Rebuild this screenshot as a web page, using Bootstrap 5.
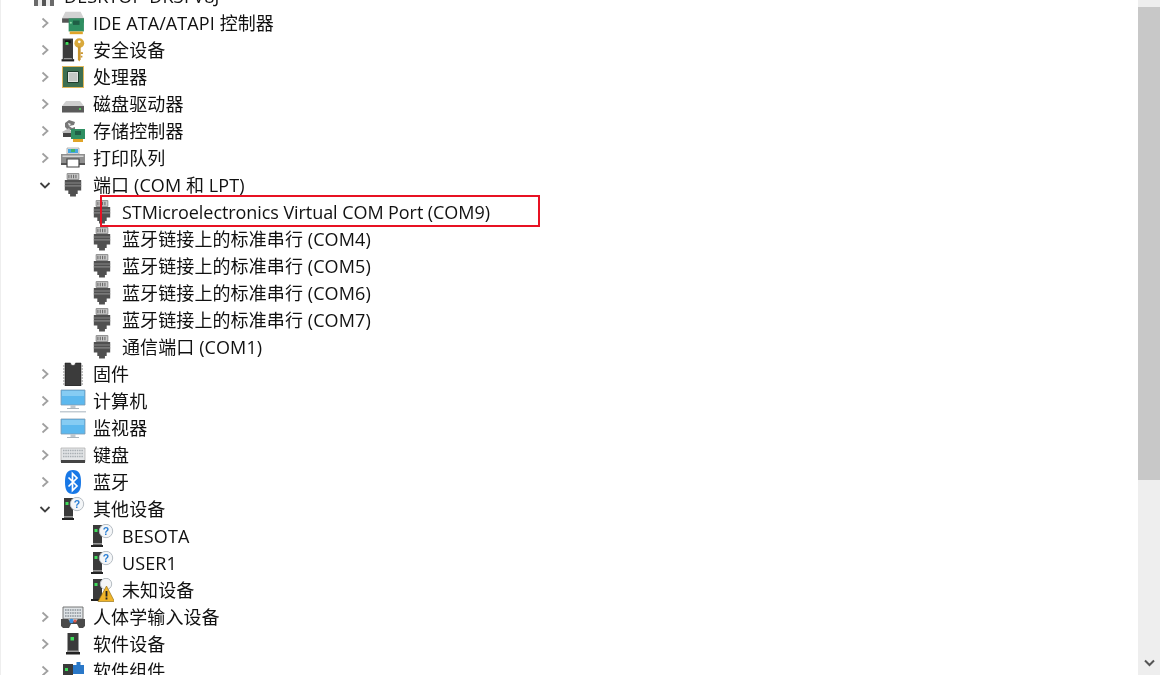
<!DOCTYPE html>
<html lang="zh-CN">
<head>
<meta charset="utf-8">
<title>设备管理器</title>
<link href="https://cdn.jsdelivr.net/npm/bootstrap@5.3.0/dist/css/bootstrap.min.css" rel="stylesheet">
<style>
html,body{height:100%;overflow:hidden;background:#fff}
body{font-family:"Open Sans","Noto Sans CJK SC",sans-serif;font-size:18px;color:#111}
.dm-shell{width:1163px;height:675px;overflow:hidden;border-left:1px solid #eee}
.dm-tree{flex:0 0 1137px;overflow:hidden;position:relative}
.dm-list{margin:-18px 0 0;padding:0;list-style:none;filter:blur(.3px)}
.dm-row{height:27px;white-space:nowrap}
.dm-row.l1{padding-left:36px}
.dm-row.l2{padding-left:89px}
.dm-row.l0{padding-left:7px}
.dm-tw{flex:0 0 16px;width:16px;height:16px;margin-right:8px}
.dm-ic{flex:0 0 24px;width:24px;height:24px;margin-right:8px}
.dm-ic.dm-wide{flex-basis:26px;width:26px;margin:0 7px 0 -1px}
.dm-lab{letter-spacing:.1px;line-height:27px;transform:translateY(1px)}
.dm-tight{letter-spacing:-.07px}
.dm-red{position:absolute;left:99px;top:195px;width:440px;height:32px;border:2px solid #e81123;pointer-events:none}
.dm-sb{flex:0 0 22px;width:22px;height:675px;background:#eee;position:relative}
.dm-thumb{height:473px;margin-top:7px;background:#c8c8c8}
.dm-arr{position:absolute;left:6px;bottom:8px;width:11px;height:8px}
</style>
</head>
<body>
<svg width="0" height="0" class="position-absolute">
<defs>
<symbol id="chev-r" viewBox="0 0 16 16"><path d="M5.500 3.500 10.500 8 5.500 12.500" fill="none" stroke="#a0a0a0" stroke-width="1.800"/></symbol>
<symbol id="chev-d" viewBox="0 0 16 16"><path d="M3.500 6 8 10.500 12.500 6" fill="none" stroke="#404040" stroke-width="1.800"/></symbol>
<symbol id="ic-top" viewBox="0 0 24 24">
<path d="M2 0h20v22h-4V5H6v17H2z" fill="#6a6a6a"/><path d="M6 5h12v17H6z" fill="#ededed"/><path d="M10 8h4v14h-4z" fill="#555"/>
</symbol>
<symbol id="ic-port" viewBox="5 1.500 14 20.500">
<path d="M7 2h10v5H7z" fill="#c9c9c9" stroke="#888" stroke-width=".8"/>
<path d="M8.500 3v3M10.500 3v3M12.500 3v3M14.500 3v3" stroke="#666" stroke-width=".9"/>
<path d="M5 7.500h14v9h-3v3h-1.500v2h-5v-2H8v-3H5z" fill="#505050"/>
<path d="M5 10h14M5 12.500h14" stroke="#858585" stroke-width=".9"/>
</symbol>
<symbol id="ic-ide" viewBox="1 1.500 22 21.500">
<path d="M2 8 5 2h14l3 6v3H2z" fill="#d2d2d2"/><path d="M2 8h20v4H2z" fill="#555"/>
<path d="M8 8h14v12H8z" fill="#2f8f62"/><path d="M12 10h6v4h-6z" fill="#1f5f46"/><circle cx="10" cy="12" r="1" fill="#8fd9a8"/>
<path d="M9 20h12v2.500H9z" fill="#e0a428"/>
</symbol>
<symbol id="ic-sec" viewBox="1.500 1.500 21 21">
<path d="M3 2h9v18H3z" fill="#3c3c3c"/><path d="M5 3.500h5V6H5z" fill="#111"/><path d="M5.500 5h2.500v2.500H5.500z" fill="#3fdc5a"/>
<path d="M2 20h11v2H2z" fill="#222"/><path d="M4 19h7v1H4z" fill="#999"/>
<circle cx="17.500" cy="6" r="4.300" fill="#d9a93c"/><circle cx="17.500" cy="4.800" r="1.200" fill="#fff"/>
<path d="M16.300 9h2.400v11l-1.200 2-1.200-1.500z" fill="#c9952e"/><path d="M18.700 14h2v1.500h-2zM18.700 17h1.500v1.500h-1.500z" fill="#c9952e"/>
</symbol>
<symbol id="ic-cpu" viewBox="0 0 24 24">
<path d="M1 1h22v22H1z" fill="#e2b85c"/><path d="M2 2h20v20H2z" fill="#3c6e50"/><path d="M6.500 6.500h11v11h-11z" fill="#dfe3df" stroke="#1f3d2c"/>
<path d="M8 8h8v8H8z" fill="#c5c9c5"/>
</symbol>
<symbol id="ic-disk" viewBox="0 0 24 24">
<path d="M5 9h14l4 5H1z" fill="#cfcfcf"/><path d="M1 14h22v6H1z" fill="#5a5a5a"/><path d="M1 20h22v1H1z" fill="#aaa"/><circle cx="19" cy="17" r="1.100" fill="#4fdc5a"/>
</symbol>
<symbol id="ic-stor" viewBox="0 0 24 24">
<path d="M8 1l6 2-1 3-5 1 3 2 3-1v3H7l-3-3V4z" fill="#777"/><path d="M7 4l3 1-2 2z" fill="#eee"/>
<path d="M1 13l7-4 3 5H2z" fill="#bbb"/><path d="M2 14h9v4H2z" fill="#444"/>
<path d="M10 10h14v10H10z" fill="#2f8f62"/><path d="M14 12h6v4h-6z" fill="#1f5f46"/><path d="M12 20h10v3H12z" fill="#e0a428"/>
</symbol>
<symbol id="ic-prn" viewBox="0 0 24 24">
<path d="M6 2h12v6H6z" fill="#f2f2f2" stroke="#999" stroke-width=".7"/><path d="M7 3h10v4H7z" fill="#49a6e0"/><path d="M10 3h4v3h-4z" fill="#3fb56b"/>
<path d="M0 8h24v9H0z" fill="#8f8f8f"/><path d="M1.500 9.500h21V11h-21z" fill="#d5d5d5"/><path d="M0 17h24v2H0z" fill="#555"/>
<path d="M6 13h12v8H6z" fill="#fff" stroke="#444" stroke-width="1.200"/>
</symbol>
<symbol id="ic-fw" viewBox="0 0 24 24">
<path d="M4 1h5.500a2.500 2.500 0 0 0 5 0H20v23H4z" fill="#3b3b3b" stroke="#111" stroke-width=".5"/>
<path d="M2 4h2M2 7h2M2 10h2M2 13h2M2 16h2M2 19h2M2 22h2M20 4h2M20 7h2M20 10h2M20 13h2M20 16h2M20 19h2M20 22h2" stroke="#aaa" stroke-width="1.300"/>
</symbol>
<symbol id="ic-pc" viewBox="0 0 26 24">
<path d="M1 1h24v15H1z" fill="#5cb8ee" stroke="#7d9bb0" stroke-width=".8"/><path d="M2 2h22v5H2z" fill="#86ccf3"/>
<path d="M10.500 16h5v3h-5z" fill="#c0c8ce"/><path d="M7 19h12v1H7z" fill="#a9b4bc"/><path d="M0 22h26v1.500H0z" fill="#c4ccd3"/>
</symbol>
<symbol id="ic-mon" viewBox="0 0 26 24">
<path d="M1 3h24v15H1z" fill="#5cb8ee" stroke="#7d9bb0" stroke-width=".8"/><path d="M2 4h22v5H2z" fill="#86ccf3"/>
<path d="M10.500 18h5v3h-5z" fill="#c0c8ce"/><path d="M7 21h12v1H7z" fill="#a9b4bc"/>
</symbol>
<symbol id="ic-kb" viewBox="0 0 26 24">
<path d="M1 5h24v14H1z" fill="#e3e5e7" stroke="#aaa" stroke-width=".7"/><path d="M3 7.500h20M3 10.500h20M3 13.500h20" stroke="#a8aeb3" stroke-width="1.500" stroke-dasharray="1.500 .8"/>
<path d="M1 17h24v3H1z" fill="#444"/>
</symbol>
<symbol id="ic-bt" viewBox="0 0 24 24">
<path d="M12 0c6 0 8 4 8 12s-2 12-8 12-8-4-8-12 2-12 8-12z" fill="#1878e6"/>
<path d="M7.500 7.500 16 16l-4.500 4.500v-17L16 8l-8.500 8.500" fill="none" stroke="#fff" stroke-width="1.700"/>
</symbol>
<symbol id="ic-oth" viewBox="0 0 24 24">
<path d="M3 1h9v20H3z" fill="#3a3a3a"/><path d="M4.500 5h3v3h-3z" fill="#3fdc5a"/><path d="M1 21h12v2H1z" fill="#222"/><path d="M3 19h9v1.500H3z" fill="#999"/>
<circle cx="16" cy="7" r="6.700" fill="#f4f6f8" stroke="#b5bcc2"/>
<text x="16" y="10.700" text-anchor="middle" font-family="Liberation Sans" font-weight="700" font-size="10.500" fill="#2b7fd4">?</text>
</symbol>
<symbol id="ic-unk" viewBox="0 0 24 24">
<path d="M3 1h9v20H3z" fill="#3a3a3a"/><path d="M4.500 5h3v3h-3z" fill="#3fdc5a"/><path d="M1 21h12v2H1z" fill="#222"/>
<circle cx="16" cy="6" r="5.700" fill="#f4f6f8" stroke="#b5bcc2"/>
<path d="M16.500 8 24.500 23.500H8z" fill="#f0b429" stroke="#8a6a12" stroke-width=".6"/><path d="M15.600 13h1.800v5.500h-1.800zM15.600 19.500h1.800v2h-1.800z" fill="#222"/>
</symbol>
<symbol id="ic-hid" viewBox="0 0 26 24">
<path d="M3 2h20v12H3z" fill="#dfe3e6" stroke="#6a6a6a" stroke-width=".9"/><path d="M5 5h16M5 8h16M5 11h16" stroke="#8d949a" stroke-width="1.400" stroke-dasharray="1.600 .8"/>
<path d="M1 14h7l2 2h6l2-2h7v7l-2 2h-4l-2-4h-6l-2 4H3l-2-2z" fill="#4a4a4a"/><circle cx="11.500" cy="16" r="2.200" fill="#3a8fe0"/><circle cx="15" cy="16" r="1.600" fill="#e2584a"/>
</symbol>
<symbol id="ic-sw" viewBox="0 0 24 24">
<path d="M6.500 1h11v19h-11z" fill="#3a3a3a"/><path d="M9.500 5h3.500v3.500H9.500z" fill="#3fdc5a"/><path d="M5 20h14v2.500H5z" fill="#222"/><path d="M6.500 18.500h11V20h-11z" fill="#999"/>
</symbol>
<symbol id="ic-comp" viewBox="0 0 24 24">
<path d="M2 5h10v18H2z" fill="#3a3a3a"/><path d="M4 9h3v3H4z" fill="#3fdc5a"/>
<path d="M12 6h3.500V3h4v3H23v9H12z" fill="#2a78c8"/>
</symbol>
</defs>
</svg>
<div class="dm-shell d-flex">
  <main class="dm-tree">
    <ul class="dm-list">
      <li class="dm-row l0 d-flex align-items-center"><svg class="dm-tw"><use href="#chev-d"/></svg><svg class="dm-ic"><use href="#ic-top"/></svg><span class="dm-lab">DESKTOP-DK3FV8J</span></li>
      <li class="dm-row l1 d-flex align-items-center"><svg class="dm-tw"><use href="#chev-r"/></svg><svg class="dm-ic"><use href="#ic-ide"/></svg><span class="dm-lab">IDE ATA/ATAPI 控制器</span></li>
      <li class="dm-row l1 d-flex align-items-center"><svg class="dm-tw"><use href="#chev-r"/></svg><svg class="dm-ic"><use href="#ic-sec"/></svg><span class="dm-lab">安全设备</span></li>
      <li class="dm-row l1 d-flex align-items-center"><svg class="dm-tw"><use href="#chev-r"/></svg><svg class="dm-ic"><use href="#ic-cpu"/></svg><span class="dm-lab">处理器</span></li>
      <li class="dm-row l1 d-flex align-items-center"><svg class="dm-tw"><use href="#chev-r"/></svg><svg class="dm-ic"><use href="#ic-disk"/></svg><span class="dm-lab">磁盘驱动器</span></li>
      <li class="dm-row l1 d-flex align-items-center"><svg class="dm-tw"><use href="#chev-r"/></svg><svg class="dm-ic"><use href="#ic-stor"/></svg><span class="dm-lab">存储控制器</span></li>
      <li class="dm-row l1 d-flex align-items-center"><svg class="dm-tw"><use href="#chev-r"/></svg><svg class="dm-ic"><use href="#ic-prn"/></svg><span class="dm-lab">打印队列</span></li>
      <li class="dm-row l1 d-flex align-items-center"><svg class="dm-tw"><use href="#chev-d"/></svg><svg class="dm-ic"><use href="#ic-port"/></svg><span class="dm-lab">端口 (COM 和 LPT)</span></li>
      <li class="dm-row l2 d-flex align-items-center"><svg class="dm-ic"><use href="#ic-port"/></svg><span class="dm-lab dm-tight">STMicroelectronics Virtual COM Port (COM9)</span></li>
      <li class="dm-row l2 d-flex align-items-center"><svg class="dm-ic"><use href="#ic-port"/></svg><span class="dm-lab">蓝牙链接上的标准串行 (COM4)</span></li>
      <li class="dm-row l2 d-flex align-items-center"><svg class="dm-ic"><use href="#ic-port"/></svg><span class="dm-lab">蓝牙链接上的标准串行 (COM5)</span></li>
      <li class="dm-row l2 d-flex align-items-center"><svg class="dm-ic"><use href="#ic-port"/></svg><span class="dm-lab">蓝牙链接上的标准串行 (COM6)</span></li>
      <li class="dm-row l2 d-flex align-items-center"><svg class="dm-ic"><use href="#ic-port"/></svg><span class="dm-lab">蓝牙链接上的标准串行 (COM7)</span></li>
      <li class="dm-row l2 d-flex align-items-center"><svg class="dm-ic"><use href="#ic-port"/></svg><span class="dm-lab">通信端口 (COM1)</span></li>
      <li class="dm-row l1 d-flex align-items-center"><svg class="dm-tw"><use href="#chev-r"/></svg><svg class="dm-ic"><use href="#ic-fw"/></svg><span class="dm-lab">固件</span></li>
      <li class="dm-row l1 d-flex align-items-center"><svg class="dm-tw"><use href="#chev-r"/></svg><svg class="dm-ic dm-wide"><use href="#ic-pc"/></svg><span class="dm-lab">计算机</span></li>
      <li class="dm-row l1 d-flex align-items-center"><svg class="dm-tw"><use href="#chev-r"/></svg><svg class="dm-ic dm-wide"><use href="#ic-mon"/></svg><span class="dm-lab">监视器</span></li>
      <li class="dm-row l1 d-flex align-items-center"><svg class="dm-tw"><use href="#chev-r"/></svg><svg class="dm-ic dm-wide"><use href="#ic-kb"/></svg><span class="dm-lab">键盘</span></li>
      <li class="dm-row l1 d-flex align-items-center"><svg class="dm-tw"><use href="#chev-r"/></svg><svg class="dm-ic"><use href="#ic-bt"/></svg><span class="dm-lab">蓝牙</span></li>
      <li class="dm-row l1 d-flex align-items-center"><svg class="dm-tw"><use href="#chev-d"/></svg><svg class="dm-ic"><use href="#ic-oth"/></svg><span class="dm-lab">其他设备</span></li>
      <li class="dm-row l2 d-flex align-items-center"><svg class="dm-ic"><use href="#ic-oth"/></svg><span class="dm-lab">BESOTA</span></li>
      <li class="dm-row l2 d-flex align-items-center"><svg class="dm-ic"><use href="#ic-oth"/></svg><span class="dm-lab">USER1</span></li>
      <li class="dm-row l2 d-flex align-items-center"><svg class="dm-ic"><use href="#ic-unk"/></svg><span class="dm-lab">未知设备</span></li>
      <li class="dm-row l1 d-flex align-items-center"><svg class="dm-tw"><use href="#chev-r"/></svg><svg class="dm-ic dm-wide"><use href="#ic-hid"/></svg><span class="dm-lab">人体学输入设备</span></li>
      <li class="dm-row l1 d-flex align-items-center"><svg class="dm-tw"><use href="#chev-r"/></svg><svg class="dm-ic"><use href="#ic-sw"/></svg><span class="dm-lab">软件设备</span></li>
      <li class="dm-row l1 d-flex align-items-center"><svg class="dm-tw"><use href="#chev-r"/></svg><svg class="dm-ic"><use href="#ic-comp"/></svg><span class="dm-lab">软件组件</span></li>
    </ul>
    <div class="dm-red"></div>
  </main>
  <aside class="dm-sb">
    <div class="dm-thumb"></div>
    <svg class="dm-arr" viewBox="0 0 11 8"><path d="M1 1.500 5.500 6 10 1.500" fill="none" stroke="#555" stroke-width="2"/></svg>
  </aside>
</div>
<script src="https://cdn.jsdelivr.net/npm/bootstrap@5.3.0/dist/js/bootstrap.bundle.min.js"></script>
</body>
</html>
